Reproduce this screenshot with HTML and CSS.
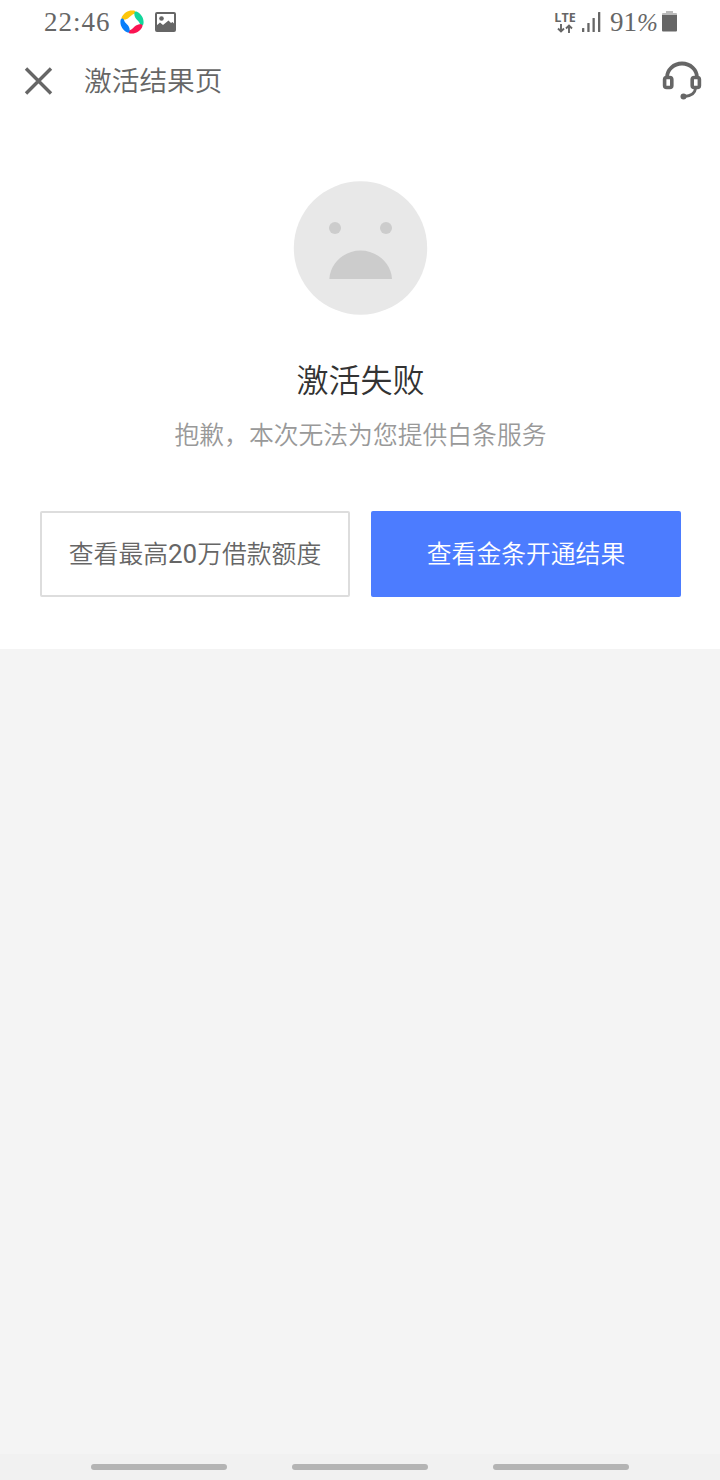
FILE: index.html
```
<!DOCTYPE html>
<html lang="zh-CN">
  <head>
    <meta charset="UTF-8" />
    <meta name="viewport" content="width=device-width, initial-scale=1.0" />
    <title>激活结果页</title>
    <link rel="stylesheet" href="styles.css">
  </head>
  <body>
    <div class="status-bar">
      <span class="time">22:46</span>
      <svg class="app-icon" width="24" height="24" viewBox="0 0 24 24">
        <defs>
          <path id="petal" d="M1.800 7C4 2.500 9-.4 14 .6c2.200.6 2 3-.2 3.500C10.500 5 9.500 8.800 5.500 9.500 2.500 10 .8 9.300 1.800 7z" />
        </defs>
        <use href="#petal" fill="#fcc60a" />
        <use href="#petal" fill="#12d69b" transform="rotate(90 12 12)" />
        <use href="#petal" fill="#fb1452" transform="rotate(180 12 12)" />
        <use href="#petal" fill="#087efb" transform="rotate(270 12 12)" />
      </svg>
      <svg class="photo-icon" width="21" height="20" viewBox="0 0 21 20">
        <rect x="1" y="1" width="19" height="18" rx="1" fill="none" stroke="#666" stroke-width="2" />
        <circle cx="6.500" cy="6.500" r="2.300" fill="#666" />
        <path fill="#666" d="M1 14l4-3.500 3 2.500 5.500-4.500 2.500 2.500 1.500-1L20 12.500V19H1z" />
      </svg>
      <div class="network">
        <span class="lte">LTE</span>
        <svg width="16" height="9" viewBox="0 0 16 9" fill="none" stroke="#666" stroke-width="1.900">
          <path d="M4 0v7.500M1 4.500l3 3 3-3M12 9V1.500M9 4.500l3-3 3 3" />
        </svg>
      </div>
      <svg class="signal" width="19" height="21" viewBox="0 0 19 21" fill="#666">
        <rect x="0" y="16" width="2.300" height="4" rx=".5" />
        <rect x="5.300" y="11" width="2.300" height="9" rx=".5" />
        <rect x="10.500" y="6" width="2.300" height="14" rx=".5" />
        <rect x="16" y="0" width="2.300" height="20" rx=".5" />
      </svg>
      <span class="percent">91<i>%</i></span>
      <svg class="battery" width="15" height="22" viewBox="0 0 15 22">
        <path fill="#bbb" d="M4 0h7v2h3q1 0 1 1v1.500H0V3q0-1 1-1h3z" />
        <path fill="#666" d="M0 4h15v15.500q0 1-1 1H1q-1 0-1-1z" />
      </svg>
    </div>

    <header class="title-bar">
      <svg width="29" height="28" viewBox="0 0 29 28" stroke="#666" stroke-width="3.400">
        <path d="M2 1.500l25 25M27 1.500l-25 25" />
      </svg>
      <h1>激活结果页</h1>
      <svg class="service" width="40" height="40" viewBox="0 0 40 40" fill="none" stroke="#666">
        <path stroke-width="3.800" d="M5 17.500v-1a15 14 0 0 1 30 0v1" />
        <rect x="2.600" y="16.500" width="7.200" height="10" rx="2" stroke-width="3.600" />
        <rect x="30.200" y="16.500" width="7.200" height="10" rx="2" stroke-width="3.600" />
        <path stroke-width="2.800" d="M33.500 27.500c-.5 4.500-4.500 7.500-11 8" />
        <circle cx="21.500" cy="35.500" r="3" fill="#666" stroke="none" />
      </svg>
    </header>

    <main class="result">
      <svg class="face" width="135" height="134" viewBox="0 0 135 134">
        <circle cx="67.500" cy="67" r="66.700" fill="#e8e8e8" />
        <circle cx="42" cy="47" r="6" fill="#ccc" />
        <circle cx="93" cy="47" r="6" fill="#ccc" />
        <path fill="#ccc" d="M36.300 98C37.500 81 52 69.500 67.500 69.500S98 81 99 98z" />
      </svg>
      <h2>激活失败</h2>
      <p>抱歉，本次无法为您提供白条服务</p>
      <div class="buttons">
        <button class="btn">查看最高<span class="amount">20</span>万借款额度</button>
        <button class="btn btn-primary">查看金条开通结果</button>
      </div>
    </main>

    <footer class="nav-bar">
      <span></span>
      <span></span>
      <span></span>
    </footer>
  </body>
</html>
```

FILE: styles.css
```
* {
  box-sizing: border-box;
}

body {
  height: 1480px;
  margin: 0;
  display: flex;
  flex-direction: column;
  overflow: hidden;
  font-family: "Noto Sans CJK SC", sans-serif;
  background-color: #f4f4f4;
}

.status-bar {
  height: 44px;
  padding: 0 43px 0 44px;
  display: flex;
  align-items: center;
  color: #666;
  background-color: #fff;
}

.time,
.percent {
  font-family: "Liberation Serif", serif;
  font-size: 27px;
  line-height: 44px;
}

.time {
  width: 76px;
  letter-spacing: 1px;
}

.photo-icon {
  margin-left: 11px;
}

.network {
  width: 22px;
  margin-left: auto;
  display: flex;
  flex-direction: column;
  align-items: center;
}

.lte {
  font-family: "Open Sans", sans-serif;
  font-size: 12.500px;
  font-weight: 700;
  line-height: 12px;
}

.signal {
  margin-left: 6px;
}

.percent {
  width: 52px;
  margin-left: 9px;
  white-space: nowrap;
}

.percent i {
  font-size: 25px;
}

.title-bar {
  height: 74px;
  padding: 0 18px 0 24px;
  display: flex;
  align-items: center;
  color: #666;
  background-color: #fff;
}

.title-bar h1 {
  margin: 0 0 4px 31px;
  font-size: 27.700px;
  font-weight: 350;
  line-height: 40px;
}

.service {
  margin-left: auto;
}

.result {
  height: 531px;
  padding: 63px 39px 0 40px;
  display: flex;
  flex-direction: column;
  align-items: center;
  background-color: #fff;
}

.result h2 {
  margin: 39px 0 0;
  color: #333;
  font-size: 32px;
  font-weight: 350;
  line-height: 48px;
}

.result p {
  margin: 13px 0 0;
  color: #999;
  font-size: 24.800px;
  font-weight: 350;
  line-height: 36px;
}

.buttons {
  width: 100%;
  margin-top: 60px;
  display: flex;
  gap: 21px;
}

.btn {
  width: 310px;
  height: 86px;
  padding: 0 0 5px;
  color: #666;
  font-family: inherit;
  font-size: 24.800px;
  font-weight: 350;
  background-color: #fff;
  border: 2px solid #ddd;
  border-radius: 2px;
}

.btn-primary {
  color: #fff;
  background-color: #4c7cff;
  border: none;
}

.amount {
  font-family: Roboto, sans-serif;
  font-size: 26px;
  font-weight: 400;
}

.nav-bar {
  height: 26px;
  margin-top: auto;
  padding: 0 91px;
  display: flex;
  align-items: center;
  justify-content: space-between;
  background-color: #f1f1f1;
}

.nav-bar span {
  width: 136px;
  height: 6px;
  border-radius: 3px;
  background-color: #b4b4b4;
}
```
